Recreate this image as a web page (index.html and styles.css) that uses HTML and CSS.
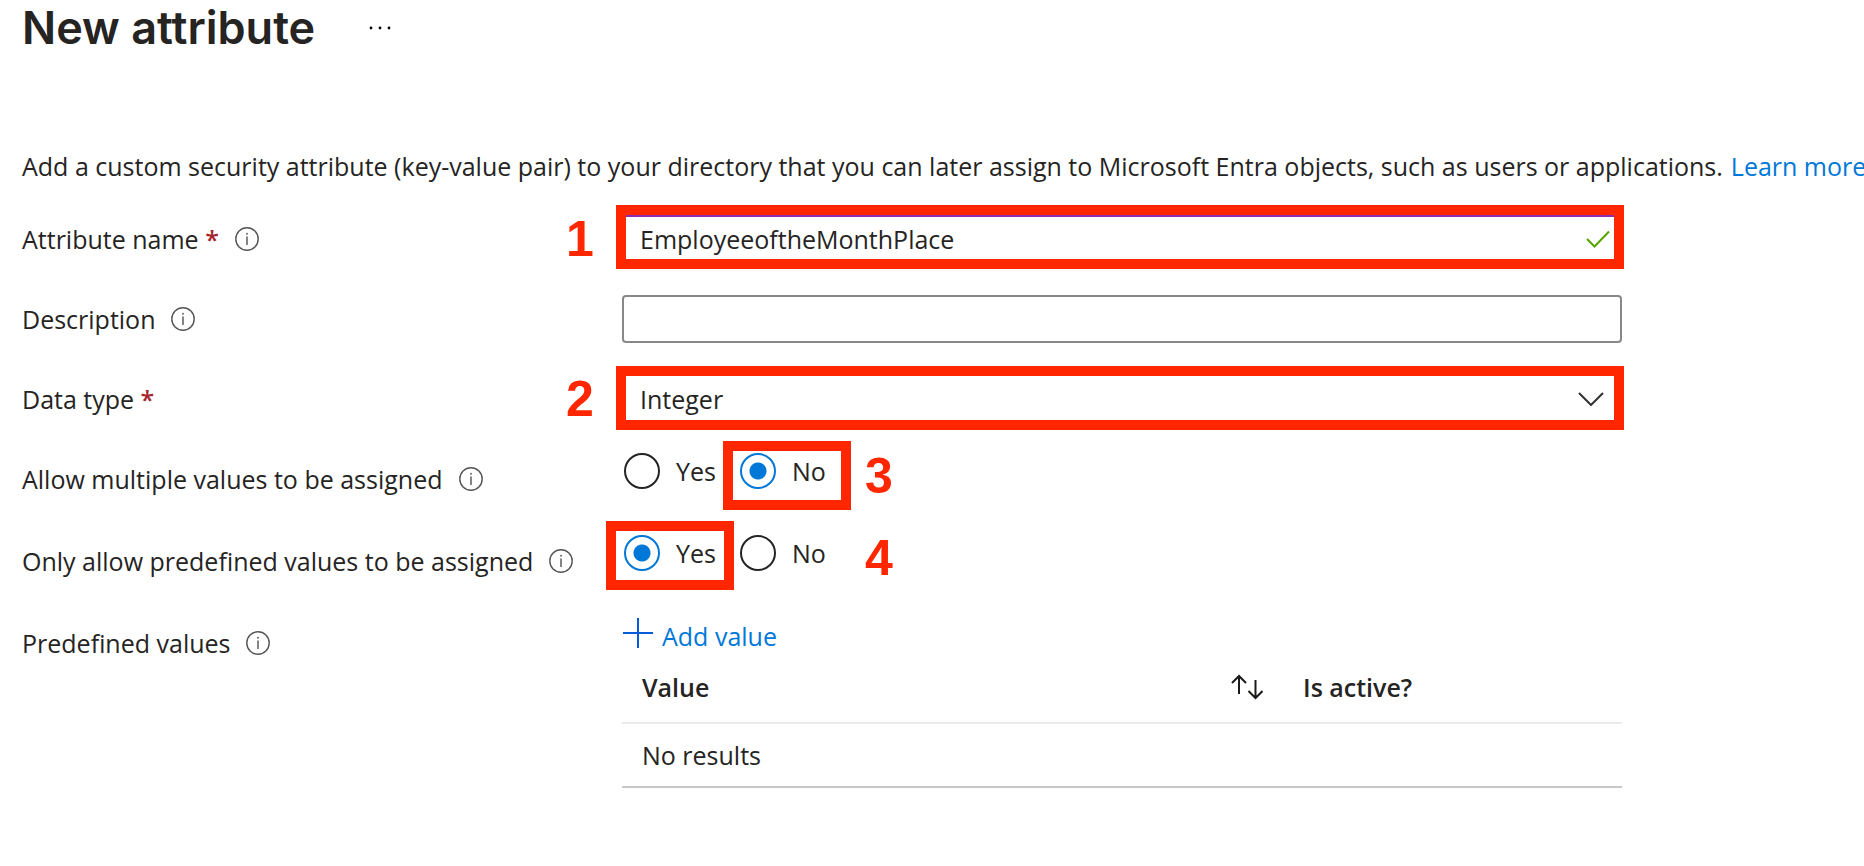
FILE: index.html
```html
<!DOCTYPE html>
<html lang="en">
<head>
    <meta charset="UTF-8">
    <title>New attribute</title>
    <meta name="viewport" content="width=device-width, initial-scale=1.0">
    <link rel="stylesheet" href="styles.css">
</head>
<body>
    <svg class="sprite" aria-hidden="true">
        <symbol id="info" viewBox="0 0 24 24">
            <circle cx="12" cy="12" r="11.2" fill="none" stroke="#555" stroke-width="1.4"/>
            <path d="M12 9.5V18" stroke="#666" stroke-width="1.6"/>
            <circle cx="12" cy="6.8" r="1" fill="#666"/>
        </symbol>
    </svg>

    <header class="page-header">
        <h1>New attribute</h1>
        <button class="more" type="button" aria-label="More">
            <svg width="22" height="4" viewBox="0 0 22 4"><circle cx="2" cy="2" r="1.4"/><circle cx="11" cy="2" r="1.4"/><circle cx="20" cy="2" r="1.4"/></svg>
        </button>
    </header>

    <main>
        <p class="intro">
            <span>Add a custom security attribute (key-value pair) to your directory that you can later assign to Microsoft Entra objects, such as users or applications.</span>
            <a href="#">Learn more</a>
        </p>

        <form class="form">
            <div class="row">
                <div class="label">
                    <label for="name">Attribute name <span class="required">*</span></label>
                    <svg class="info"><use href="#info"/></svg>
                </div>
                <div class="field">
                    <input class="text-box edited" id="name" type="text" value="EmployeeoftheMonthPlace">
                    <svg class="check" viewBox="0 0 24 18"><path d="M1 9l7.500 7.500L23 1.500"/></svg>
                    <span class="mark mark-name"></span>
                    <span class="step step-left">1</span>
                </div>
            </div>

            <div class="row">
                <div class="label">
                    <label for="description">Description</label>
                    <svg class="info"><use href="#info"/></svg>
                </div>
                <div class="field">
                    <input class="text-box" id="description" type="text">
                </div>
            </div>

            <div class="row">
                <div class="label">
                    <label for="type">Data type <span class="required">*</span></label>
                </div>
                <div class="field">
                    <select class="text-box drop-down" id="type">
                        <option>Integer</option>
                    </select>
                    <svg class="chevron" viewBox="0 0 26 14"><path d="M1 1l12 12L25 1"/></svg>
                    <span class="mark mark-type"></span>
                    <span class="step step-left">2</span>
                </div>
            </div>

            <div class="row row-choice">
                <div class="label">
                    <span id="multiple">Allow multiple values to be assigned</span>
                    <svg class="info"><use href="#info"/></svg>
                </div>
                <div class="choices" role="radiogroup" aria-labelledby="multiple">
                    <label class="choice"><input type="radio" name="multiple"> Yes</label>
                    <label class="choice"><input type="radio" name="multiple" checked> No</label>
                    <span class="mark mark-no"></span>
                    <span class="step step-right">3</span>
                </div>
            </div>

            <div class="row row-choice">
                <div class="label">
                    <span id="predefined">Only allow predefined values to be assigned</span>
                    <svg class="info"><use href="#info"/></svg>
                </div>
                <div class="choices" role="radiogroup" aria-labelledby="predefined">
                    <label class="choice"><input type="radio" name="predefined" checked> Yes</label>
                    <label class="choice"><input type="radio" name="predefined"> No</label>
                    <span class="mark mark-yes"></span>
                    <span class="step step-right">4</span>
                </div>
            </div>

            <div class="row">
                <div class="label">
                    <span>Predefined values</span>
                    <svg class="info"><use href="#info"/></svg>
                </div>
                <div class="values">
                    <button class="add" type="button">
                        <svg width="30" height="30" viewBox="0 0 30 30"><path d="M15 0v30M0 15h30"/></svg>
                        Add value
                    </button>
                    <table>
                        <thead>
                            <tr>
                                <th class="col-value">
                                    <div class="sortable">
                                        Value
                                        <button class="sort" type="button" aria-label="Sort by value">
                                            <svg width="32" height="26" viewBox="0 0 32 26"><path d="M8 20V2M1 9l7-7 7 7M24.500 6v18M17.500 17l7 7 7-7"/></svg>
                                        </button>
                                    </div>
                                </th>
                                <th>Is active?</th>
                            </tr>
                        </thead>
                        <tbody>
                            <tr>
                                <td colspan="2">No results</td>
                            </tr>
                        </tbody>
                    </table>
                </div>
            </div>
        </form>
    </main>
</body>
</html>
```

FILE: styles.css
```css
:root {
    --text: #252423;
    --link: #0078d7;
    --required: #a4262c;
    --mark: #ff2600;
}

* {
    box-sizing: border-box;
}

body {
    margin: 0;
    padding: 0 0 0 22px;
    background: #fff;
    color: var(--text);
    font-family: "Open Sans", "Noto Sans", sans-serif;
    font-size: 25px;
    line-height: 36px;
}

input, select, button {
    font: inherit;
    color: inherit;
}

button {
    padding: 0;
    border: 0;
    background: none;
}

a {
    color: var(--link);
    text-decoration: none;
}

.sprite {
    display: none;
}

/* Header */
.page-header {
    display: flex;
    align-items: center;
    gap: 54px;
    height: 56px;
}

h1 {
    margin: 0;
    font-family: Inter, "Liberation Sans", sans-serif;
    font-size: 45px;
    font-weight: 600;
    line-height: 56px;
}

.more {
    display: flex;
}

.intro {
    display: flex;
    gap: 8px;
    margin: 92px 0 15px;
    white-space: nowrap;
}

/* Form rows */
.row {
    display: grid;
    grid-template-columns: 600px minmax(0, 1000px);
    align-items: start;
    min-height: 80px;
}

.row-choice {
    min-height: 82px;
}

.label {
    display: flex;
    align-items: center;
    gap: 16px;
    padding-top: 22px;
}

.required {
    color: var(--required);
    font-weight: 600;
}

.info {
    width: 24px;
    height: 24px;
}

.field {
    position: relative;
    margin-top: 16px;
}

.text-box {
    display: block;
    width: 100%;
    height: 48px;
    padding: 0 16px;
    border: 2px solid #8a8886;
    border-radius: 4px;
    background: #fff;
    outline: 0;
}

.edited {
    border-color: #8f2bb3;
}

.drop-down {
    appearance: none;
    border-color: transparent;
}

.check, .chevron {
    position: absolute;
    fill: none;
    stroke-width: 2;
}

.check {
    top: 15px;
    right: 12px;
    width: 24px;
    height: 18px;
    stroke: #57a300;
}

.chevron {
    top: 17px;
    right: 18px;
    width: 26px;
    height: 14px;
    stroke: #323130;
}

/* Radio buttons */
.choices {
    position: relative;
    display: flex;
    gap: 24px;
    padding: 14px 0 0 2px;
}

.choice {
    display: flex;
    align-items: center;
    gap: 16px;
}

.choice input {
    appearance: none;
    width: 36px;
    height: 36px;
    margin: 0;
    border: 2px solid var(--text);
    border-radius: 50%;
}

.choice input:checked {
    border-color: var(--link);
    background: radial-gradient(circle, var(--link) 8px, transparent 9px);
}

/* Walkthrough marks */
.mark {
    position: absolute;
    border: 10px solid var(--mark);
    pointer-events: none;
}

.mark-name {
    inset: -10px -2px -6px -6px;
}

.mark-type {
    inset: -9px -2px -7px -6px;
}

.mark-no, .mark-yes {
    width: 128px;
    height: 69px;
}

.mark-no {
    top: 2px;
    left: 101px;
}

.mark-yes {
    top: 0;
    left: -16px;
}

.step {
    position: absolute;
    color: var(--mark);
    font-family: "Liberation Sans", Arial, sans-serif;
    font-size: 50px;
    font-weight: 700;
    line-height: 56px;
}

.step-left {
    top: -4px;
    left: -56px;
}

.step-right {
    top: 9px;
    left: 243px;
}

/* Predefined values */
.values {
    padding-top: 15px;
}

.add {
    display: flex;
    gap: 9px;
    height: 34px;
    padding-left: 1px;
    color: var(--link);
}

.add path {
    stroke: #015cda;
    stroke-width: 2;
}

table {
    width: 100%;
    border-collapse: collapse;
    text-align: left;
}

th, td {
    height: 64px;
    padding: 0 20px;
    border-bottom: 2px solid #c8c8c8;
}

th {
    height: 71px;
    border-color: #ebebeb;
    font-weight: 600;
}

.col-value {
    width: 661px;
}

.sortable {
    display: flex;
    align-items: center;
    justify-content: space-between;
}

.sort {
    display: flex;
}

.sort path {
    fill: none;
    stroke: #1b1a19;
    stroke-width: 2;
}
```
